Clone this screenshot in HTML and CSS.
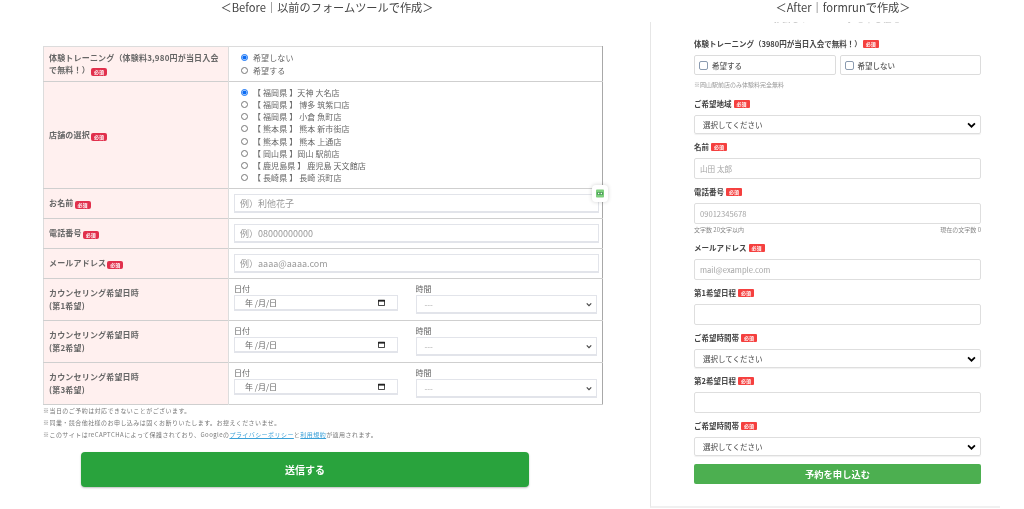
FILE: index.html
```html
<!DOCTYPE html>
<html lang="ja">
<head>
    <meta charset="UTF-8">
    <meta name="viewport" content="width=device-width, initial-scale=1.0">
    <title>Before / After</title>
    <link rel="stylesheet" href="styles.css">
</head>
<body>
    <div class="page">
        <section class="before">
            <h2 class="page-title before-title">＜Before｜以前のフォームツールで作成＞</h2>
            <div class="table-wrap">
                <table class="old-form">
                    <tr class="row-trial">
                        <th>体験トレーニング（体験料3,980円が当日入会で無料！）<span class="badge">必須</span></th>
                        <td class="radio-cell">
                            <label class="radio"><input type="radio" name="trial" checked>希望しない</label>
                            <label class="radio"><input type="radio" name="trial">希望する</label>
                        </td>
                    </tr>
                    <tr class="row-store">
                        <th>店舗の選択<span class="badge">必須</span></th>
                        <td class="radio-cell">
                            <label class="radio"><input type="radio" name="store" checked>【 福岡県 】天神 大名店</label>
                            <label class="radio"><input type="radio" name="store">【 福岡県 】 博多 筑紫口店</label>
                            <label class="radio"><input type="radio" name="store">【 福岡県 】 小倉 魚町店</label>
                            <label class="radio"><input type="radio" name="store">【 熊本県 】 熊本 新市街店</label>
                            <label class="radio"><input type="radio" name="store">【 熊本県 】 熊本 上通店</label>
                            <label class="radio"><input type="radio" name="store">【 岡山県 】岡山 駅前店</label>
                            <label class="radio"><input type="radio" name="store">【 鹿児島県 】 鹿児島 天文館店</label>
                            <label class="radio"><input type="radio" name="store">【 長崎県 】 長崎 浜町店</label>
                        </td>
                    </tr>
                    <tr class="row-text row-name">
                        <th>お名前<span class="badge">必須</span></th>
                        <td><input class="old-input" type="text" placeholder="例）利他花子"></td>
                    </tr>
                    <tr class="row-text">
                        <th>電話番号<span class="badge">必須</span></th>
                        <td><input class="old-input" type="text" placeholder="例）08000000000"></td>
                    </tr>
                    <tr class="row-text">
                        <th>メールアドレス<span class="badge">必須</span></th>
                        <td><input class="old-input" type="text" placeholder="例）aaaa@aaaa.com"></td>
                    </tr>
                    <tr class="row-date">
                        <th>カウンセリング希望日時<br>(第1希望)</th>
                        <td>
                            <div class="date-time">
                                <div class="date-col">
                                    <div class="mini-label">日付</div>
                                    <div class="date-box">年 /月/日<svg class="cal" viewBox="0 0 8 8"><path d="M.5 1.5h7v6h-7z" fill="none" stroke="#222"/><path d="M0 1h8v2H0z" fill="#222"/></svg></div>
                                </div>
                                <div class="time-col">
                                    <div class="mini-label">時間</div>
                                    <div class="time-box">---<svg class="small-chev" viewBox="0 0 8 6"><path d="M1 1.5l3 3 3-3" fill="none" stroke="#444" stroke-width="1.5"/></svg></div>
                                </div>
                            </div>
                        </td>
                    </tr>
                    <tr class="row-date">
                        <th>カウンセリング希望日時<br>(第2希望)</th>
                        <td>
                            <div class="date-time">
                                <div class="date-col">
                                    <div class="mini-label">日付</div>
                                    <div class="date-box">年 /月/日<svg class="cal" viewBox="0 0 8 8"><path d="M.5 1.5h7v6h-7z" fill="none" stroke="#222"/><path d="M0 1h8v2H0z" fill="#222"/></svg></div>
                                </div>
                                <div class="time-col">
                                    <div class="mini-label">時間</div>
                                    <div class="time-box">---<svg class="small-chev" viewBox="0 0 8 6"><path d="M1 1.5l3 3 3-3" fill="none" stroke="#444" stroke-width="1.5"/></svg></div>
                                </div>
                            </div>
                        </td>
                    </tr>
                    <tr class="row-date">
                        <th>カウンセリング希望日時<br>(第3希望)</th>
                        <td>
                            <div class="date-time">
                                <div class="date-col">
                                    <div class="mini-label">日付</div>
                                    <div class="date-box">年 /月/日<svg class="cal" viewBox="0 0 8 8"><path d="M.5 1.5h7v6h-7z" fill="none" stroke="#222"/><path d="M0 1h8v2H0z" fill="#222"/></svg></div>
                                </div>
                                <div class="time-col">
                                    <div class="mini-label">時間</div>
                                    <div class="time-box">---<svg class="small-chev" viewBox="0 0 8 6"><path d="M1 1.5l3 3 3-3" fill="none" stroke="#444" stroke-width="1.5"/></svg></div>
                                </div>
                            </div>
                        </td>
                    </tr>
                </table>
                <div class="float-icon"><svg viewBox="0 0 9 9"><rect width="9" height="9" rx="1" fill="#7ccf7c"/><rect x="1" y="3" width="7" height="3" fill="#4c9a58"/><circle cx="3" cy="4.5" r=".8" fill="#fff"/><circle cx="6" cy="4.5" r=".8" fill="#fff"/></svg></div>
            </div>
            <div class="notes">
                <p>※当日のご予約は対応できないことがございます。</p>
                <p>※同業・競合他社様のお申し込みは固くお断りいたします。お控えくださいませ。</p>
                <p>※このサイトはreCAPTCHAによって保護されており、Googleの<a href="#">プライバシーポリシー</a>と<a href="#">利用規約</a>が適用されます。</p>
            </div>
            <button class="send-btn" type="button">送信する</button>
        </section>

        <section class="after">
            <h2 class="page-title">＜After｜formrunで作成＞</h2>
            <div class="panel">
                <div class="clipped"><span>お試しトレーニングを申し込む</span></div>
                <div class="field first">
                    <div class="label">体験トレーニング（3980円が当日入会で無料！）<span class="req wide">必須</span></div>
                    <div class="checks">
                        <label class="check"><input type="checkbox">希望する</label>
                        <label class="check"><input type="checkbox">希望しない</label>
                    </div>
                    <div class="hint">※岡山駅前店のみ体験料完全無料</div>
                </div>
                <div class="field">
                    <div class="label">ご希望地域<span class="req">必須</span></div>
                    <div class="select-box">選択してください<svg class="chev" viewBox="0 0 10 7"><path d="M1 1.5l4 4 4-4" fill="none" stroke="#000" stroke-width="2"/></svg></div>
                </div>
                <div class="field">
                    <div class="label">名前<span class="req">必須</span></div>
                    <input class="new-input" type="text" placeholder="山田 太郎">
                </div>
                <div class="field">
                    <div class="label">電話番号<span class="req">必須</span></div>
                    <input class="new-input" type="text" placeholder="09012345678">
                    <div class="counter"><span>文字数 20文字以内</span><span>現在の文字数 0</span></div>
                </div>
                <div class="field">
                    <div class="label">メールアドレス<span class="req">必須</span></div>
                    <input class="new-input" type="text" placeholder="mail@example.com">
                </div>
                <div class="field">
                    <div class="label">第1希望日程<span class="req">必須</span></div>
                    <input class="new-input" type="text">
                </div>
                <div class="field">
                    <div class="label">ご希望時間帯<span class="req">必須</span></div>
                    <div class="select-box">選択してください<svg class="chev" viewBox="0 0 10 7"><path d="M1 1.5l4 4 4-4" fill="none" stroke="#000" stroke-width="2"/></svg></div>
                </div>
                <div class="field">
                    <div class="label">第2希望日程<span class="req">必須</span></div>
                    <input class="new-input" type="text">
                </div>
                <div class="field">
                    <div class="label">ご希望時間帯<span class="req">必須</span></div>
                    <div class="select-box">選択してください<svg class="chev" viewBox="0 0 10 7"><path d="M1 1.5l4 4 4-4" fill="none" stroke="#000" stroke-width="2"/></svg></div>
                </div>
                <button class="reserve-btn" type="button">予約を申し込む</button>
            </div>
        </section>
    </div>
</body>
</html>
```

FILE: styles.css
```css
* {
    box-sizing: border-box;
}

body {
    margin: 0;
    background-color: #fff;
    font-family: "Noto Sans CJK JP", "Noto Sans", sans-serif;
    color: #555;
    overflow: hidden;
}

.page {
    display: flex;
    height: 509px;
    padding-left: 43px;
    filter: blur(0.35px);
}

.page-title {
    margin: 0;
    height: 14px;
    font-size: 11.2px;
    line-height: 14px;
    font-weight: 400;
    text-align: center;
    color: #444;
    white-space: nowrap;
}

.before {
    width: 560px;
}

.before-title {
    padding-left: 8px;
    margin-bottom: 32px;
}

.table-wrap {
    position: relative;
}

.old-form {
    width: 560px;
    height: 359px;
    table-layout: fixed;
    border-collapse: collapse;
    border-top: 1px solid #dcdcdc;
    border-left: 1px solid #dcdcdc;
    border-right: 1px solid #a8a8a8;
    border-bottom: 1px solid #dcdcdc;
}

.old-form tr {
    border-bottom: 1px solid #cfcfcf;
}

.old-form th {
    width: 185px;
    padding: 0 5px;
    background-color: #fff0ef;
    border-right: 1px solid #dddddd;
    font-size: 8px;
    line-height: 12.5px;
    font-weight: 700;
    letter-spacing: 0.18px;
    text-align: left;
    color: #666;
}

.old-form td {
    padding: 0 5px;
    vertical-align: middle;
}

.row-trial {
    height: 35px;
}

.row-store {
    height: 107px;
}

.row-name {
    height: 31px;
}

.row-text {
    height: 30px;
}

.row-date {
    height: 42px;
}

.old-form .radio-cell {
    padding-left: 12px;
}

.radio {
    display: flex;
    align-items: center;
    height: 12.1px;
    font-size: 8px;
    letter-spacing: 0.1px;
    color: #666;
    white-space: nowrap;
}

.radio input {
    width: 7px;
    height: 7px;
    margin: 0 5px 0 0;
    accent-color: #0a6cf5;
}

.badge {
    display: inline-block;
    width: 16px;
    height: 8px;
    margin-left: 1px;
    border-radius: 2px;
    background-color: #e1304c;
    color: #fff;
    font-size: 5px;
    line-height: 8px;
    text-align: center;
    letter-spacing: 0;
    vertical-align: -1px;
}

.old-input {
    display: block;
    width: 365px;
    height: 19px;
    padding: 0 5px;
    border: 1px solid #e2e4ea;
    border-bottom-width: 2px;
    font-family: inherit;
    font-size: 9px;
}

.old-input::placeholder {
    color: #999;
}

.date-time {
    display: flex;
    gap: 18px;
    margin-top: -2px;
}

.date-col {
    width: 164px;
}

.time-col {
    width: 182px;
}

.mini-label {
    height: 12px;
    font-size: 8px;
    line-height: 11px;
    color: #666;
}

.date-box {
    display: flex;
    align-items: center;
    justify-content: space-between;
    height: 16px;
    padding: 0 12px 0 10px;
    border: 1px solid #e2e4ea;
    border-bottom-width: 2px;
    font-size: 8px;
    color: #666;
}

.cal {
    width: 7px;
    height: 7px;
}

.time-box {
    display: flex;
    align-items: center;
    justify-content: space-between;
    height: 19px;
    padding: 0 4px 0 8px;
    border: 1px solid #e2e4ea;
    border-bottom-width: 2px;
    font-size: 8px;
    color: #aaa;
}

.small-chev {
    width: 6px;
    height: 5px;
}

.float-icon {
    position: absolute;
    top: 139px;
    left: 549px;
    display: flex;
    align-items: center;
    justify-content: center;
    width: 16px;
    height: 17px;
    border-radius: 4px;
    background-color: #fff;
    box-shadow: 0 0 4px rgba(0, 0, 0, 0.18);
}

.float-icon svg {
    width: 8px;
    height: 9px;
}

.notes p {
    margin: 0;
    height: 12px;
    font-size: 6px;
    line-height: 12px;
    letter-spacing: 0.45px;
    color: #777;
    white-space: nowrap;
}

.notes a {
    color: #3aa0d8;
}

.send-btn {
    display: block;
    width: 448px;
    height: 35px;
    margin: 11px 0 0 38px;
    border: none;
    border-radius: 4px;
    background-color: #29a33d;
    box-shadow: 0 1px 2px rgba(0, 0, 0, 0.25);
    color: #fff;
    font-family: inherit;
    font-size: 10px;
    font-weight: 700;
}

.after {
    width: 350px;
    margin-left: 47px;
}

.after .page-title {
    width: 386px;
    margin-bottom: 8px;
}

.panel {
    width: 350px;
    height: 486px;
    padding: 0 19px 0 43px;
    border-left: 1px solid #e6e6e6;
    border-bottom: 2px solid #f0f0f0;
}

.clipped {
    display: flex;
    align-items: flex-end;
    justify-content: center;
    height: 2px;
    overflow: hidden;
    font-size: 8px;
    line-height: 10px;
    letter-spacing: 1.2px;
    color: #bbb;
}

.field {
    margin-top: 8px;
}

.field.first {
    margin-top: 15px;
}

.label {
    display: flex;
    align-items: center;
    height: 10px;
    margin-bottom: 6px;
    font-size: 7.5px;
    line-height: 10px;
    font-weight: 700;
    color: #444;
    white-space: nowrap;
}

.req {
    width: 16px;
    height: 8px;
    margin-left: 2px;
    border-radius: 1px;
    background-color: #f5403f;
    color: #fff;
    font-size: 5px;
    line-height: 8px;
    text-align: center;
}

.req.wide {
    margin-left: 1px;
}

.checks {
    display: flex;
    gap: 4px;
}

.check {
    display: flex;
    flex: 1;
    align-items: center;
    height: 20px;
    padding-left: 4px;
    border: 1px solid #dcdcdc;
    border-radius: 2px;
    font-size: 7.5px;
    font-weight: 500;
    color: #555;
}

.check input {
    appearance: none;
    width: 9px;
    height: 9px;
    margin: 0 4px 0 0;
    border: 1px solid #8a9aaf;
    border-radius: 2px;
    background-color: #fff;
}

.hint {
    height: 10px;
    margin: 5px 0 9px;
    font-size: 6px;
    line-height: 10px;
    color: #999;
}

.select-box {
    display: flex;
    align-items: center;
    justify-content: space-between;
    height: 19px;
    padding: 0 4px 0 8px;
    border: 1px solid #dedede;
    border-radius: 2px;
    box-shadow: 0 1px 1px rgba(0, 0, 0, 0.06);
    font-size: 7.5px;
    color: #444;
}

.chev {
    width: 9px;
    height: 6px;
}

.new-input {
    display: block;
    width: 100%;
    height: 21px;
    padding: 0 5px;
    border: 1px solid #dedede;
    border-radius: 2px;
    font-family: inherit;
    font-size: 7.6px;
}

.new-input::placeholder {
    color: #a5a5a5;
}

.counter {
    display: flex;
    justify-content: space-between;
    height: 10px;
    margin: 1px 0;
    font-size: 6px;
    line-height: 10px;
    color: #888;
}

.reserve-btn {
    display: block;
    width: 100%;
    height: 20px;
    margin-top: 8px;
    border: none;
    border-radius: 2px;
    background-color: #4caf50;
    color: #fff;
    font-family: inherit;
    font-size: 9.3px;
    font-weight: 700;
}
```
